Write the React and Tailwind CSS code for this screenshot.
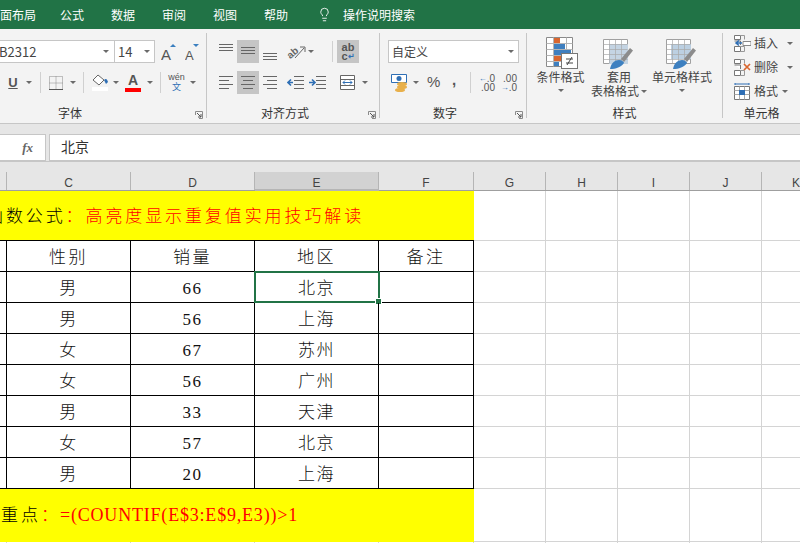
import { Lightbulb } from 'lucide-react';

const TABS = ['公式', '数据', '审阅', '视图', '帮助'];
const COLS = [
  { label: '', w: 'w-[7px]' },
  { label: 'C', w: 'w-[124px]' },
  { label: 'D', w: 'w-[124px]' },
  { label: 'E', w: 'w-[124px]', active: true },
  { label: 'F', w: 'w-[95px]' },
  { label: 'G', w: 'w-[72px]' },
  { label: 'H', w: 'w-[72px]' },
  { label: 'I', w: 'w-[72px]' },
  { label: 'J', w: 'w-[72px]' },
  { label: 'K', w: 'flex-1' },
];
const ROWS = [
  ['性别', '销量', '地区'],
  ['男', '66', '北京'],
  ['男', '56', '上海'],
  ['女', '67', '苏州'],
  ['女', '56', '广州'],
  ['男', '33', '天津'],
  ['女', '57', '北京'],
  ['男', '20', '上海'],
];

function Caret({ className = '' }) {
  return (
    <svg width="6" height="3" viewBox="0 0 6 3" className={`shrink-0 ${className}`}>
      <path d="M0 0h6L3 3z" fill="#6a6a6a" />
    </svg>
  );
}

function Sep({ className = '' }) {
  return <div className={`w-px h-[85px] mt-[4px] bg-[#c6c6c6] shrink-0 ${className}`} />;
}

function VSep({ className = '' }) {
  return <div className={`w-px h-[21px] bg-[#d0d0d0] shrink-0 ${className}`} />;
}

function Launcher() {
  return (
    <svg width="8" height="8" viewBox="0 0 8 8" className="absolute right-[3px] bottom-[4px]">
      <path d="M0.5 4V0.5H7.5V7.5H4" fill="none" stroke="#8a8a8a" />
      <path d="M2 2l4 4M6 3v3H3" fill="none" stroke="#555" />
    </svg>
  );
}

function Lines({ ys, className = '' }) {
  return (
    <svg width="14" height="23" viewBox="0 0 14 23" className={`shrink-0 ${className}`}>
      {ys.map(([y, a, b]) => (
        <path key={y} d={`M${a} ${y}.5H${b}`} stroke="#666" />
      ))}
    </svg>
  );
}

function Sel({ children, className = '' }) {
  return (
    <div className={`w-[22px] h-[23px] bg-[#c5c5c5] flex items-center justify-center shrink-0 ${className}`}>
      {children}
    </div>
  );
}

function Indent({ flip, className = '' }) {
  return (
    <svg width="17" height="14" viewBox="0 0 17 14" className={`shrink-0 ${className}`}>
      <path d="M7 .5h10M7 4.5h10M7 8.5h10M7 12.5h10" stroke="#666" />
      {flip ? (
        <path d="M0 6.5h5M3 3.5l3 3-3 3" fill="none" stroke="#2f6fb5" strokeWidth="1.6" />
      ) : (
        <path d="M1 6.5h5M4 3.5l-3 3 3 3" fill="none" stroke="#2f6fb5" strokeWidth="1.6" />
      )}
    </svg>
  );
}

function CondIcon() {
  return (
    <svg width="33" height="33" viewBox="0 0 33 33">
      <path d="M1.5.5h26v29h-26z" fill="#fff" stroke="#8a8a8a" />
      <path d="M1.5 6.5h26M1.5 12.5h26M1.5 18.5h26M1.5 24.5h26M8.5.5v29M21.5.5v29" stroke="#b5b5b5" />
      <rect x="9" y="1" width="6" height="5" fill="#d9662e" />
      <rect x="9" y="7" width="11" height="5" fill="#3f7fbf" />
      <rect x="9" y="13" width="17" height="5" fill="#3f7fbf" />
      <rect x="9" y="19" width="9" height="5" fill="#d9662e" />
      <rect x="9" y="25" width="5" height="4" fill="#3f7fbf" />
      <rect x="16.5" y="16.5" width="16" height="15" fill="#fff" stroke="#777" />
      <path d="M21 22h7M21 26h7M27 20l-5 8" fill="none" stroke="#444" />
    </svg>
  );
}

function TableIcon({ full }) {
  return (
    <svg width="32" height="33" viewBox="0 0 32 33">
      <path d="M.5 2.5h24v24H.5z" fill="#fff" stroke="#a0a0a0" />
      {full ? (
        <path d="M5 7h20v15H5z" fill="#bcd0e2" />
      ) : (
        <path d="M6 7h19v20H6z" fill="#c4d4e3" />
      )}
      <path d="M.5 7.5h24M.5 12.5h24M.5 17.5h24M.5 22.5h24M6.5 2.5v24M12.5 2.5v24M18.5 2.5v24" stroke="#a9a9a9" strokeWidth="0.7" />
      <path d="M18 22L27 11l3 2.5L21 25z" fill="#8c8c8c" />
      <path d="M7 32c1-6 5-9 9-9 3 0 5 2 5 3-3 4-8 6-14 6z" fill="#3e80c0" />
    </svg>
  );
}

function CellIcon({ kind }) {
  return (
    <svg width="17" height="17" viewBox="0 0 17 17" className="shrink-0">
      {kind === 'format' ? (
        <>
          <path d="M.5 3.5h15v13H.5z" fill="#fff" stroke="#777" />
          <path d="M.5 7.5h15M.5 11.5h15M5.5 3.5v13M10.5 3.5v13" stroke="#aaa" />
          <rect x="5" y="7" width="6" height="5" fill="#2f6fb5" />
          <path d="M1 1h14M1 0v2M15 0v2" stroke="#2f6fb5" />
        </>
      ) : (
        <>
          <path d="M.5.5h6v4h-6zM.5 11.5h6v5h-6zM.5 6h6v4" fill="#fff" stroke="#777" />
          <path d="M6.5.5h4v4M6.5 11.5h4v5h-4" fill="none" stroke="#999" />
          {kind === 'insert' ? (
            <>
              <path d="M9 6.5h8v4H9z" fill="#fff" stroke="#888" />
              <path d="M2 8h6M5 5.5L2 8l3 2.5" fill="none" stroke="#2f6fb5" strokeWidth="1.5" />
            </>
          ) : (
            <path d="M10 5l6 6M16 5l-6 6" stroke="#d9662e" strokeWidth="1.7" />
          )}
        </>
      )}
    </svg>
  );
}

function TitleBar() {
  return (
    <div className="h-[29px] bg-[#217346] text-white text-[12px] flex items-center overflow-hidden shrink-0">
      <span className="-ml-[12px] w-[48px]">页面布局</span>
      <div className="ml-[24px] flex gap-[27px]">
        {TABS.map((t) => (
          <span key={t} className="w-[24px]">{t}</span>
        ))}
      </div>
      <Lightbulb size={15} strokeWidth={1.4} className="ml-[29px]" />
      <span className="ml-[11px]">操作说明搜索</span>
    </div>
  );
}

function FontGroup() {
  return (
    <div className="relative w-[206px] flex flex-col pt-[11px] shrink-0">
      <div className="h-[23px] flex items-center">
        <div className="w-[115px] h-[23px] bg-white border-y border-r border-[#c6c6c6] flex items-center overflow-hidden text-[13px] text-[#444]">
          <span className="-ml-[1px]">B2312</span>
          <Caret className="ml-auto mr-[5px]" />
        </div>
        <div className="w-[40px] h-[23px] bg-white border border-l-0 border-[#c6c6c6] flex items-center text-[13px] text-[#444] pl-[3px]">
          <span>14</span>
          <Caret className="ml-auto mr-[4px]" />
        </div>
        <svg width="19" height="18" viewBox="0 0 19 18" className="ml-[6px]">
          <text x="0" y="17" fontSize="15" fontFamily="Liberation Sans" fill="#555">A</text>
          <path d="M9 4l3-3 3 3z" fill="#3a7fbf" />
        </svg>
        <svg width="16" height="18" viewBox="0 0 16 18" className="ml-[5px]">
          <text x="0" y="17" fontSize="13" fontFamily="Liberation Sans" fill="#555">A</text>
          <path d="M8 1h6l-3 3z" fill="#3a7fbf" />
        </svg>
      </div>
      <div className="h-[23px] mt-[8px] flex items-center">
        <span className="ml-[7px] w-[12px] text-center text-[13px] font-bold underline text-[#555] font-['Liberation_Sans',sans-serif]">U</span>
        <Caret className="ml-[7px]" />
        <VSep className="ml-[8px]" />
        <svg width="14" height="14" viewBox="0 0 14 14" className="ml-[8px]">
          <path d="M.5.5h13v13H.5zM.5 7h13M7 .5v13" fill="none" stroke="#888" strokeDasharray="1 1" />
          <path d="M0 13.5h14" stroke="#555" />
        </svg>
        <Caret className="ml-[7px]" />
        <VSep className="ml-[7px]" />
        <div className="ml-[7px] w-[17px] flex flex-col items-center">
          <svg width="17" height="12" viewBox="0 0 17 12">
            <path d="M7 1l6 5-5 5-6-5z" fill="#fff" stroke="#666" />
            <path d="M13 6c2-2 3-1 4 2l-2 2z" fill="#2f6fb5" />
          </svg>
          <div className="w-[16px] h-[4px] bg-white mt-[1px]" />
        </div>
        <Caret className="ml-[5px]" />
        <div className="ml-[6px] w-[16px] flex flex-col items-center">
          <span className="text-[14px] leading-[13px] font-bold text-[#555] font-['Liberation_Sans',sans-serif]">A</span>
          <div className="w-[16px] h-[4px] bg-[#ff0000] mt-[1px]" />
        </div>
        <Caret className="ml-[6px]" />
        <VSep className="ml-[7px]" />
        <div className="ml-[7px] w-[17px] flex flex-col items-center leading-none">
          <span className="text-[9px] leading-[9px] text-[#555] font-['Liberation_Sans',sans-serif]">wén</span>
          <span className="text-[9px] leading-[10px] text-[#2f6fb5]">文</span>
        </div>
        <Caret className="ml-[5px]" />
      </div>
      <div className="mt-auto mb-[1px] h-[18px] w-[140px] text-center text-[12px] leading-[18px] text-[#333]">字体</div>
      <Launcher />
    </div>
  );
}

function AlignGroup() {
  return (
    <div className="relative w-[172px] flex flex-col pt-[11px] shrink-0">
      <div className="h-[23px] flex items-center pl-[12px]">
        <Lines ys={[[4, 0, 14], [7, 0, 14], [10, 0, 14]]} />
        <Sel className="ml-[4px]"><Lines ys={[[7, 0, 14], [10, 0, 14], [13, 0, 14]]} /></Sel>
        <Lines className="ml-[4px]" ys={[[13, 0, 14], [16, 0, 14], [19, 0, 14]]} />
        <svg width="19" height="18" viewBox="0 0 19 18" className="ml-[10px]">
          <text x="0" y="13" fontSize="10" fontFamily="Liberation Sans" fontWeight="700" fill="#666" transform="rotate(-40 6 10)">ab</text>
          <path d="M8 15L17 5M13 4h5v5" fill="none" stroke="#666" />
        </svg>
        <Caret className="ml-[2px]" />
        <VSep className="ml-[18px]" />
        <Sel className="ml-[4px] flex-col leading-[9px] text-[#555] font-['Liberation_Sans',sans-serif] text-[11px] font-semibold">
          <span>ab</span>
          <span className="flex items-center">c<span className="text-[#2f6fb5] text-[8px]">↵</span></span>
        </Sel>
      </div>
      <div className="h-[23px] mt-[8px] flex items-center pl-[12px]">
        <Lines ys={[[5, 0, 14], [9, 0, 10], [13, 0, 14], [17, 0, 10]]} />
        <Sel className="ml-[4px]"><Lines ys={[[5, 0, 14], [9, 2, 12], [13, 0, 14], [17, 2, 12]]} /></Sel>
        <Lines className="ml-[4px]" ys={[[5, 0, 14], [9, 4, 14], [13, 0, 14], [17, 4, 14]]} />
        <Indent className="ml-[10px]" />
        <Indent flip className="ml-[5px]" />
        <svg width="15" height="15" viewBox="0 0 15 15" className="ml-[14px]">
          <path d="M.5.5h14v14H.5zM.5 4.5h14M.5 10.5h14" fill="#fff" stroke="#666" />
          <path d="M3 7.5h9M5 5.5l-2 2 2 2M10 5.5l2 2-2 2" fill="none" stroke="#2f6fb5" />
        </svg>
        <Caret className="ml-[7px]" />
      </div>
      <div className="mt-auto mb-[1px] h-[18px] pr-[16px] text-center text-[12px] leading-[18px] text-[#333]">对齐方式</div>
      <Launcher />
    </div>
  );
}

function NumberGroup() {
  return (
    <div className="relative w-[146px] flex flex-col pt-[11px] shrink-0">
      <div className="ml-[8px] w-[131px] h-[23px] bg-white border border-[#c6c6c6] flex items-center text-[12px] text-[#444] pl-[3px]">
        <span>自定义</span>
        <Caret className="ml-auto mr-[4px]" />
      </div>
      <div className="h-[23px] mt-[8px] flex items-center">
        <svg width="17" height="19" viewBox="0 0 17 19" className="ml-[11px]">
          <path d="M.5 1.5h15v8H.5z" fill="#fff" stroke="#2f6fb5" />
          <circle cx="8" cy="5.5" r="2.5" fill="#2f6fb5" />
          <ellipse cx="11" cy="11" rx="5" ry="2" fill="#e8b04b" />
          <ellipse cx="11" cy="14" rx="5" ry="2" fill="#e8b04b" />
          <ellipse cx="9" cy="17" rx="5" ry="2" fill="#e8b04b" />
        </svg>
        <Caret className="ml-[5px]" />
        <span className="ml-[8px] w-[14px] text-[15px] text-[#555] font-['Liberation_Sans',sans-serif]">%</span>
        <span className="ml-[11px] w-[8px] text-[15px] font-bold text-[#555] font-['Liberation_Sans',sans-serif] -translate-y-[2px]">,</span>
        <VSep className="ml-[10px]" />
        <div className="ml-[7px] w-[17px] flex flex-col items-end text-[10px] leading-[9px] text-[#555] font-['Liberation_Sans',sans-serif]">
          <span className="flex"><span className="text-[#2f6fb5] text-[8px]">←</span>.0</span>
          <span>.00</span>
        </div>
        <div className="ml-[5px] w-[17px] flex flex-col items-end text-[10px] leading-[9px] text-[#555] font-['Liberation_Sans',sans-serif]">
          <span>.00</span>
          <span className="flex"><span className="text-[#2f6fb5] text-[8px]">→</span>.0</span>
        </div>
      </div>
      <div className="mt-auto mb-[1px] h-[18px] pr-[16px] text-center text-[12px] leading-[18px] text-[#333]">数字</div>
      <Launcher />
    </div>
  );
}

function StyleGroup() {
  return (
    <div className="w-[195px] flex flex-col shrink-0 text-[12px] text-[#444]">
      <div className="flex pl-[4px] pt-[8px]">
        <div className="w-[59px] flex flex-col items-center">
          <div className="h-[33px] pl-[2px]"><CondIcon /></div>
          <span className="leading-[14px]">条件格式</span>
          <Caret className="mt-[5px]" />
        </div>
        <div className="w-[58px] flex flex-col items-center">
          <div className="h-[33px]"><TableIcon /></div>
          <span className="leading-[14px]">套用</span>
          <span className="leading-[14px] flex items-center">表格格式<Caret className="ml-[2px]" /></span>
        </div>
        <div className="w-[68px] flex flex-col items-center">
          <div className="h-[33px]"><TableIcon full /></div>
          <span className="leading-[14px]">单元格样式</span>
          <Caret className="mt-[5px]" />
        </div>
      </div>
      <div className="mt-auto mb-[1px] h-[18px] text-center leading-[18px] text-[#333]">样式</div>
    </div>
  );
}

function CellsGroup() {
  const items = [
    { kind: 'insert', label: '插入', gap: 'ml-[9px]' },
    { kind: 'delete', label: '删除', gap: 'ml-[9px]' },
    { kind: 'format', label: '格式', gap: 'ml-[4px]' },
  ];
  return (
    <div className="flex-1 flex flex-col pt-[2px] text-[12px] text-[#444]">
      {items.map((it) => (
        <div key={it.kind} className="h-[24px] flex items-center pl-[11px]">
          <CellIcon kind={it.kind} />
          <span className="ml-[3px]">{it.label}</span>
          <Caret className={it.gap} />
        </div>
      ))}
      <div className="mt-auto mb-[1px] h-[18px] text-center leading-[18px] text-[#333]">单元格</div>
    </div>
  );
}

function FormulaBar() {
  return (
    <div className="h-[48px] bg-[#e6e6e6] shrink-0 pt-[10px]">
      <div className="flex h-[27px]">
        <div className="w-[46px] bg-white border-y border-r border-[#c6c6c6] flex items-center justify-end pr-[12px]">
          <span className="font-['Liberation_Serif',serif] italic font-bold text-[13px] text-[#666]">fx</span>
        </div>
        <div className="ml-[3px] flex-1 bg-white border-y border-l border-[#c6c6c6] flex items-center pl-[11px] pb-[2px] text-[14px] text-[#333]">
          北京
        </div>
      </div>
      <div className="h-[11px] border-t border-[#c6c6c6]" />
    </div>
  );
}

function ColHeader() {
  return (
    <div className="h-[19px] flex bg-[#e6e6e6] shrink-0 border-b border-[#9f9f9f] text-[12px] text-[#444] font-['Liberation_Sans',sans-serif]">
      {COLS.map((c) => (
        <div
          key={c.label || 'b'}
          className={`${c.w} ${c.active ? 'bg-[#d2d2d2] border-b-2 border-[#217346] h-[19px]' : ''} ${c.label === 'K' ? 'overflow-hidden pl-[30px]' : 'border-r border-[#b5b5b5] text-center'} leading-[22px]`}
        >
          {c.label}
        </div>
      ))}
    </div>
  );
}

function BlankCells({ height }) {
  return COLS.slice(5).map((c) => (
    <div key={c.label} className={`${c.w} ${height} border-b border-[#d4d4d4] ${c.label === 'K' ? '' : 'border-r'}`} />
  ));
}

function Sheet() {
  return (
    <div className="flex-1 bg-white overflow-hidden font-['Liberation_Serif','Noto_Sans_CJK_SC',serif] font-light">
      <div className="flex">
        <div className="w-[474px] h-[50px] bg-[#ffff00] border-b border-black flex items-center overflow-hidden text-[17px] tracking-[2.9px] text-black whitespace-nowrap pt-[3px]">
          <span className="-ml-[14px]">函数公式<span className="text-[#ff0000]">：高亮度显示重复值实用技巧解读</span></span>
        </div>
        <BlankCells height="h-[50px]" />
      </div>
      {ROWS.map((row, r) => (
        <div key={r} className="flex relative">
          <div className="w-[7px] h-[31px] border-r border-b border-black" />
          {row.map((v, i) => (
            <div
              key={i}
              className={`w-[124px] h-[31px] border-r border-b border-black flex items-center justify-center pt-[4px] text-[#111] ${r === 0 ? 'text-[17px] tracking-[2.5px]' : 'text-[17px] tracking-[1.5px]'}`}
            >
              {v}
            </div>
          ))}
          <div className="w-[95px] h-[31px] border-r border-b border-black flex items-center justify-center pt-[4px] text-[17px] tracking-[2.5px] text-[#111]">
            {r === 0 ? '备注' : ''}
          </div>
          <BlankCells height="h-[31px]" />
          {r === 1 && (
            <div className="absolute left-[254px] -top-[1px] w-[126px] h-[32px] border-2 border-[#217346]">
              <div className="absolute -right-[4px] -bottom-[4px] w-[7px] h-[7px] bg-[#217346] border border-white" />
            </div>
          )}
        </div>
      ))}
      <div className="flex">
        <div className="w-[474px] h-[53px] bg-[#ffff00] flex items-center overflow-hidden text-[#ff0000] whitespace-nowrap">
          <span className="text-[17px] tracking-[3px] text-black ml-[1px]">重点<span className="text-[#ff0000]">：</span></span>
          <span className="text-[18px] tracking-[0.8px] -ml-[1px]">=(COUNTIF(E$3:E$9,E3))&gt;1</span>
        </div>
        <BlankCells height="h-[53px]" />
      </div>
      <div className="flex h-[10px]">
        {COLS.map((c) => (
          <div key={c.label || 'b'} className={`${c.w} ${c.label === 'K' ? '' : 'border-r border-[#d4d4d4]'}`} />
        ))}
      </div>
    </div>
  );
}

export default function App() {
  return (
    <div className="w-[800px] h-[543px] overflow-hidden flex flex-col bg-white font-['Noto_Sans_CJK_SC','Noto_Sans',sans-serif]">
      <TitleBar />
      <div className="h-[95px] bg-[#f3f3f3] border-b border-[#c6c6c6] flex shrink-0">
        <FontGroup />
        <Sep />
        <AlignGroup />
        <Sep />
        <NumberGroup />
        <Sep />
        <StyleGroup />
        <Sep />
        <CellsGroup />
      </div>
      <FormulaBar />
      <ColHeader />
      <Sheet />
    </div>
  );
}
